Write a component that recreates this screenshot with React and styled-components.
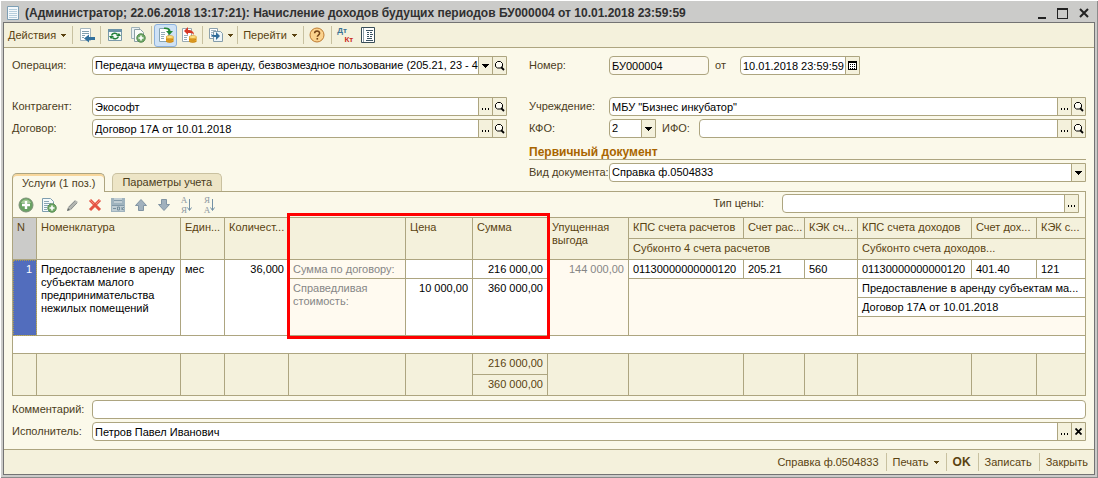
import React, { useState } from 'react'
import styled, { createGlobalStyle, css } from 'styled-components'

const line = '#ada580'
const brown = '#5a4311'

const GlobalStyle = createGlobalStyle`
  * {
    box-sizing: border-box;
  }

  body {
    margin: 0;
    background: #fff;
    color: #000;
    font-family: 'Liberation Sans', Arial, sans-serif;
    font-size: 11px;
    line-height: 13px;
  }

  button, input, select {
    font: inherit;
    color: inherit;
    margin: 0;
    padding: 0;
    border: 0;
    border-radius: 0;
    background: none;
  }
`

/* ---------- icons ---------- */

const Icon = ({ children, size = 16 }) => (
  <svg width={size} height={size} viewBox='0 0 16 16' aria-hidden='true'>
    {children}
  </svg>
)

const Arrow = () => (
  <svg width='7' height='4' viewBox='0 0 7 4' shapeRendering='crispEdges' aria-hidden='true'>
    <path d='M0 0h7v1H6v1H5v1H4v1H3V3H2V2H1V1H0z' fill='currentColor' />
  </svg>
)

const SmallArrow = () => (
  <svg width='5' height='3' viewBox='0 0 5 3' shapeRendering='crispEdges' aria-hidden='true'>
    <path d='M0 0h5v1H4v1H3v1H2V2H1V1H0z' fill='currentColor' />
  </svg>
)

const Magnifier = () => (
  <svg width='10' height='10' viewBox='0 0 10 10' aria-hidden='true'>
    <path d='M2.500 .500h3l2 2v3l-2 1.500h-3l-2-1.500v-3z' fill='#fdfcf3' stroke='#000' />
    <path d='M6 6l3 3' stroke='#000' strokeWidth='1.8' />
  </svg>
)

const Dots = () => (
  <svg width='8' height='9' viewBox='0 0 8 9' shapeRendering='crispEdges' aria-hidden='true'>
    <path d='M0 6h1v2H0zM3 6h1v2H3zM6 6h1v2H6z' fill='#000' />
  </svg>
)

const Cross = () => (
  <svg width='7' height='7' viewBox='0 0 7 7' aria-hidden='true'>
    <path d='M.500 .500l6 6M6.500 .500l-6 6' stroke='#000' strokeWidth='1.8' />
  </svg>
)

const Calendar = () => (
  <svg width='9' height='9' viewBox='0 0 9 9' shapeRendering='crispEdges' aria-hidden='true'>
    <path d='M0 0h9v9H0zM1 2v6h7V2z' fill='#000' fillRule='evenodd' />
    <path d='M1 2h7v6H1z' fill='#fff' />
    <path d='M2 3h1v1H2zM4 3h1v1H4zM6 3h1v1H6zM2 5h1v1H2zM4 5h1v1H4zM6 5h1v1H6zM2 7h1v1H2zM4 7h1v1H4zM6 7h1v1H6z' fill='#000' />
  </svg>
)

const Sheet = () => (
  <Icon>
    <path d='M2.500 1.500h11v13h-11z' fill='#f4f9fc' stroke='#7d9fb5' />
    <path d='M4 4.500h8M4 6.500h8M4 8.500h8M4 10.500h8M4 12.500h8' stroke='#b5cedd' />
  </Icon>
)

const ReturnIcon = () => (
  <Icon>
    <path d='M1.500 1.500h10v12h-10z' fill='#fff' stroke='#a5b6be' />
    <path d='M3 4.500h7M3 6.500h7M3 8.500h3M3 10.500h2' stroke='#83a0ae' />
    <path d='M5 11.500l5-4v2.500h6v3h-6v2.500z' fill='#32719d' />
  </Icon>
)

const RefreshIcon = () => (
  <Icon>
    <path d='M1.500 2.500h13v11h-13z' fill='#f5faf8' stroke='#7c9aa9' />
    <path d='M1 2h14v3H1z' fill='#6b93a8' />
    <path d='M4.500 8.500c1-2.500 4.500-3 6-1' fill='none' stroke='#24813b' strokeWidth='1.6' />
    <path d='M11.500 9.500c-1 2.500-4.500 3-6 1' fill='none' stroke='#24813b' strokeWidth='1.6' />
    <path d='M9 9h5l-2-3zM2 9h5l-3 3z' fill='#24813b' />
  </Icon>
)

const Plus = () => (
  <>
    <circle cx='11' cy='11' r='4.2' fill='#73ac6a' stroke='#4e854a' />
    <path d='M11 8.500v5M8.500 11h5' stroke='#fff' strokeWidth='1.6' />
  </>
)

const CopyIcon = () => (
  <Icon>
    <path d='M1.500 .500h8v11h-8z' fill='#e9f0f1' stroke='#a0b2b8' />
    <path d='M4.500 2.500h6l3 3v9h-9z' fill='#fafcf8' stroke='#8ca0a6' />
    <Plus />
  </Icon>
)

const AddCopyIcon = () => (
  <Icon>
    <path d='M1.500 1.500h8l3 3v10h-11z' fill='#f6fafb' stroke='#7e9eaf' />
    <path d='M3 4.500h5M3 6.500h7M3 8.500h5M3 10.500h3M3 12.500h3' stroke='#8aa6b5' />
    <Plus />
  </Icon>
)

const Coins = () => (
  <>
    <path d='M8 10v4.500c0 1.500 7.500 1.500 7.500 0V10z' fill='#eca928' />
    <path d='M8 12c1 1.500 6.500 1.500 7.500 0M8 14c1 1.500 6.500 1.500 7.500 0' fill='none' stroke='#b97913' strokeWidth='.8' />
    <ellipse cx='11.800' cy='10' rx='3.700' ry='1.500' fill='#ffe082' stroke='#cf9425' strokeWidth='.6' />
  </>
)

const PostIcon = () => (
  <Icon>
    <path d='M1.500 1.500h9v13h-9z' fill='#fff' stroke='#87a4b3' />
    <path d='M3 5.500h4M3 7.500h4M3 9.500h3M3 11.500h3' stroke='#94abb7' />
    <path d='M6 .500c4-.500 6.500 1 6.500 3.500H15l-3.500 4L8 4h2.500c0-1.500-1.500-2.200-4.500-2z' fill='#238735' />
    <Coins />
  </Icon>
)

const UnpostIcon = () => (
  <Icon>
    <path d='M1.500 1.500h9v13h-9z' fill='#fff' stroke='#9aabb2' />
    <path d='M3 8.500h4M3 10.500h3M3 12.500h3' stroke='#94abb7' />
    <path d='M3 4l4-4v3c4 0 6 2 6 5-1-2-3-2-6-2v2z' fill='#d73825' />
    <Coins />
  </Icon>
)

const BasedOnIcon = () => (
  <Icon>
    <path d='M1.500 1.500h8v10h-8z' fill='#fff' stroke='#8ca1ad' />
    <path d='M3 3.500h5M3 5.500h3M3 9.500h2' stroke='#a4b7c0' />
    <path d='M5.500 4.500h7l2 2v8h-9z' fill='#eef5f7' stroke='#849dab' />
    <path d='M3 6c0 2 2 2 5 2V5l4 4-4 4v-3c-4 0-5-1-5-4z' fill='#316d9a' />
  </Icon>
)

const HelpIcon = () => (
  <Icon>
    <circle cx='8' cy='8' r='7' fill='#fbd28d' stroke='#bd7b32' />
    <path
      d='M5.600 6.300c0-3.200 5-3.200 5 0 0 1.700-2.300 1.800-2.300 3.500'
      fill='none'
      stroke='#754417'
      strokeWidth='1.5'
    />
    <path d='M7.500 11h1.600v1.600H7.500z' fill='#754417' />
  </Icon>
)

const BookIcon = () => (
  <Icon>
    <path d='M1.500 .500h13v15h-13z' fill='#fff' stroke='#394d58' />
    <path d='M3.500 1v14' stroke='#8fa0a8' />
    <path d='M6 3.500h7M7 5.500h2M10 5.500h2M7 7.500h2M10 7.500h3M7 9.500h2M10 9.500h2M7 11.500h5M6 13.500h7' stroke='#3d5563' />
  </Icon>
)

const AddIcon = () => (
  <Icon>
    <circle cx='8' cy='8' r='7' fill='#69a263' stroke='#7d9278' />
    <path d='M3 6a5.300 5.300 0 0 1 10 0z' fill='#a7cb99' />
    <path d='M8 4v8M4 8h8' stroke='#fff' strokeWidth='2.4' />
  </Icon>
)

const PencilIcon = () => (
  <Icon>
    <path d='M3 14l1-4 7-7 3 2-7 8z' fill='#b3b6b1' />
    <path d='M5 10l6-6M7 12l6-6' stroke='#8f9491' />
    <path d='M3 14l1-3 2 2z' fill='#656b68' />
  </Icon>
)

const DeleteIcon = () => (
  <Icon>
    <path d='M3 3l10 10M13 3L3 13' stroke='#e45443' strokeWidth='3' />
    <path d='M3 3l4 4M13 3L9 7' stroke='#f28c7d' />
  </Icon>
)

const SaveIcon = () => (
  <Icon>
    <path d='M1 1h14v14H1z' fill='#9fb3be' />
    <path d='M4 1h8v5H4zM2 9h12v5H2z' fill='#c0cdd3' />
    <path d='M4 3.500h8M2 8.500h12' stroke='#8299a7' />
    <path d='M3 11.500h3M7.500 10v3h2v-3zM12 10v3M14 10l-2 2 2 1' fill='none' stroke='#758e9c' />
  </Icon>
)

const MoveIcon = ({ down }) => (
  <Icon>
    <path
      d={down ? 'M5.500 2.500h5v5h3L8 13.500 2.500 7.500h3z' : 'M5.500 13.500h5v-5h3L8 2.500 2.500 8.500h3z'}
      fill='#a1b1bd'
      stroke='#8194a3'
    />
  </Icon>
)

const SortArrow = () => (
  <svg width='5' height='14' viewBox='0 0 5 14' aria-hidden='true'>
    <path d='M2.500 1v11M.500 9.500l2 3 2-3' fill='none' stroke='#7391a5' />
  </svg>
)

const WinMin = () => (
  <svg width='11' height='11' viewBox='0 0 11 11' aria-hidden='true'>
    <path d='M2 9h8v2H2z' fill='#222' />
  </svg>
)

const WinMax = () => (
  <svg width='11' height='11' viewBox='0 0 11 11' shapeRendering='crispEdges' aria-hidden='true'>
    <path d='M0 0h11v11H0zM1 2v8h9V2z' fill='#222' fillRule='evenodd' />
  </svg>
)

const WinClose = () => (
  <svg width='11' height='11' viewBox='0 0 11 11' aria-hidden='true'>
    <path d='M2 1l8 8M10 1L2 9' stroke='#222' strokeWidth='2' />
  </svg>
)

/* ---------- form fields ---------- */

const Picker = ({ kind, label }) => (
  <FieldButton type='button' aria-label={label}>
    {kind === 'dots' && <Dots />}
    {kind === 'find' && <Magnifier />}
    {kind === 'date' && <Calendar />}
    {kind === 'clear' && <Cross />}
  </FieldButton>
)

const TextField = ({ id, value = '', buttons = [], width, readOnly }) => {
  const [text, setText] = useState(value)

  return (
    <Field $width={width} $round={buttons.length === 0} $muted={readOnly}>
      <input id={id} value={text} readOnly={readOnly} onChange={(e) => setText(e.target.value)} />
      {buttons.map((kind) => (
        <Picker key={kind} kind={kind} label={kind} />
      ))}
    </Field>
  )
}

const SelectField = ({ id, value, buttons = [], width }) => (
  <Field $width={width}>
    <select id={id} defaultValue={value}>
      <option value={value}>{value}</option>
    </select>
    <DropMark>
      <Arrow />
    </DropMark>
    {buttons.map((kind) => (
      <Picker key={kind} kind={kind} label={kind} />
    ))}
  </Field>
)

/* ---------- table ---------- */

const columns = [24, null, 44, 64, 117, 67, 75, 81, 115, 61, 53, 114, 65, 48]

const ServicesTable = () => (
  <TableWrap>
    <Table>
      <colgroup>
        {columns.map((width, index) => (
          <Col key={index} $width={width} />
        ))}
      </colgroup>
      <thead>
        <HeadRow>
          <Th rowSpan='2' $active>N</Th>
          <Th rowSpan='2'>Номенклатура</Th>
          <Th rowSpan='2'>Един...</Th>
          <Th rowSpan='2'>Количест...</Th>
          <Th rowSpan='2' />
          <Th rowSpan='2'>Цена</Th>
          <Th rowSpan='2'>Сумма</Th>
          <Th rowSpan='2' $wrap>Упущенная выгода</Th>
          <Th>КПС счета расчетов</Th>
          <Th>Счет рас...</Th>
          <Th>КЭК сч...</Th>
          <Th>КПС счета доходов</Th>
          <Th>Счет дох...</Th>
          <Th $last>КЭК с...</Th>
        </HeadRow>
        <HeadRow>
          <Th colSpan='3'>Субконто 4 счета расчетов</Th>
          <Th colSpan='3' $last>Субконто счета доходов...</Th>
        </HeadRow>
      </thead>
      <tbody>
        <Row>
          <CurrentCell rowSpan='4'>1</CurrentCell>
          <Td rowSpan='4'>Предоставление в аренду субъектам малого предпринимательства нежилых помещений</Td>
          <Td rowSpan='4'>мес</Td>
          <Td rowSpan='4' $right>36,000</Td>
          <Td $muted>Сумма по договору:</Td>
          <Td />
          <Td $right>216 000,00</Td>
          <Td rowSpan='4' $right $muted>144 000,00</Td>
          <Td>01130000000000120</Td>
          <Td>205.21</Td>
          <Td>560</Td>
          <Td>01130000000000120</Td>
          <Td>401.40</Td>
          <Td $last>121</Td>
        </Row>
        <Row>
          <Td rowSpan='3' $muted>Справедливая стоимость:</Td>
          <Td rowSpan='3' $right>10 000,00</Td>
          <Td rowSpan='3' $right>360 000,00</Td>
          <Td rowSpan='3' colSpan='3' $muted />
          <Td colSpan='3' $last>Предоставление в аренду субъектам ма...</Td>
        </Row>
        <Row>
          <Td colSpan='3' $last>Договор 17А от 10.01.2018</Td>
        </Row>
        <Row>
          <Td colSpan='3' $last $muted />
        </Row>
        <EmptyRow>
          <Td colSpan='14' $last />
        </EmptyRow>
      </tbody>
      <tfoot>
        <HeadRow>
          {columns.map((width, index) => (
            <Th
              key={index}
              as='td'
              rowSpan={index === 6 ? 1 : 2}
              $right={index === 6}
              $last={index === columns.length - 1}
            >
              {index === 6 && '216 000,00'}
            </Th>
          ))}
        </HeadRow>
        <HeadRow>
          <Th as='td' $right>360 000,00</Th>
        </HeadRow>
      </tfoot>
    </Table>
    <Highlight />
  </TableWrap>
)

const App = () => {
  const [tab, setTab] = useState(0)

  return (
    <>
      <GlobalStyle />
      <Window>
        <TitleBar>
          <Sheet />
          <h1>
            (Администратор; 22.06.2018 13:17:21): Начисление доходов будущих периодов БУ000004 от
            10.01.2018 23:59:59
          </h1>
          <button type='button' aria-label='Свернуть'><WinMin /></button>
          <button type='button' aria-label='Развернуть'><WinMax /></button>
          <button type='button' aria-label='Закрыть окно'><WinClose /></button>
        </TitleBar>
        <Frame>
          <Toolbar>
            <TextButton type='button'>Действия <SmallArrow /></TextButton>
            <Separator />
            <ToolButton type='button' aria-label='Перейти к списку'><ReturnIcon /></ToolButton>
            <Separator />
            <ToolButton type='button' aria-label='Перечитать'><RefreshIcon /></ToolButton>
            <ToolButton type='button' aria-label='Скопировать'><CopyIcon /></ToolButton>
            <Separator />
            <ToolButton type='button' aria-label='Провести' $active><PostIcon /></ToolButton>
            <ToolButton type='button' aria-label='Отмена проведения'><UnpostIcon /></ToolButton>
            <Separator />
            <ToolButton type='button' aria-label='Ввести на основании' $menu>
              <BasedOnIcon />
              <SmallArrow />
            </ToolButton>
            <Separator />
            <TextButton type='button'>Перейти <SmallArrow /></TextButton>
            <Separator />
            <ToolButton type='button' aria-label='Справка'><HelpIcon /></ToolButton>
            <Separator />
            <ToolButton type='button'>
              <DebitCredit>
                <span>Дт</span>
                <b>Кт</b>
              </DebitCredit>
            </ToolButton>
            <ToolButton type='button' aria-label='Журнал'><BookIcon /></ToolButton>
          </Toolbar>

          <Content>
            <Form>
              <Column>
                <FormRow $space='large'>
                  <Label htmlFor='operation'>Операция:</Label>
                  <SelectField
                    id='operation'
                    value='Передача имущества в аренду, безвозмездное пользование (205.21, 23 - 401.40)'
                    buttons={['find']}
                  />
                </FormRow>
                <FormRow>
                  <Label htmlFor='partner'>Контрагент:</Label>
                  <TextField id='partner' value='Экософт' buttons={['dots', 'find']} />
                </FormRow>
                <FormRow>
                  <Label htmlFor='contract'>Договор:</Label>
                  <TextField id='contract' value='Договор 17А от 10.01.2018' buttons={['dots', 'find']} />
                </FormRow>
                <Tabs role='tablist'>
                  <Tab type='button' role='tab' $active={tab === 0} onClick={() => setTab(0)}>
                    Услуги (1 поз.)
                  </Tab>
                  <Tab type='button' role='tab' $active={tab === 1} onClick={() => setTab(1)}>
                    Параметры учета
                  </Tab>
                </Tabs>
              </Column>
              <Column $end>
                <FormRow $space='large'>
                  <Label htmlFor='number'>Номер:</Label>
                  <TextField id='number' value='БУ000004' width={100} readOnly />
                  <Label htmlFor='date' $width={31} $inner>от</Label>
                  <TextField id='date' value='10.01.2018 23:59:59' width={120} buttons={['date']} />
                </FormRow>
                <FormRow>
                  <Label htmlFor='company'>Учреждение:</Label>
                  <TextField id='company' value='МБУ "Бизнес инкубатор"' buttons={['dots', 'find']} />
                </FormRow>
                <FormRow>
                  <Label htmlFor='kfo'>КФО:</Label>
                  <SelectField id='kfo' value='2' width={47} />
                  <Label htmlFor='ifo' $width={43} $inner>ИФО:</Label>
                  <TextField id='ifo' buttons={['dots', 'find']} />
                </FormRow>
                <SectionTitle>Первичный документ</SectionTitle>
                <FormRow>
                  <Label htmlFor='kind'>Вид документа:</Label>
                  <SelectField id='kind' value='Справка ф.0504833' />
                </FormRow>
              </Column>
            </Form>

            <Panel>
              <CommandBar>
                <ToolButton type='button' aria-label='Добавить'><AddIcon /></ToolButton>
                <ToolButton type='button' aria-label='Добавить копированием'><AddCopyIcon /></ToolButton>
                <ToolButton type='button' aria-label='Изменить'><PencilIcon /></ToolButton>
                <ToolButton type='button' aria-label='Удалить'><DeleteIcon /></ToolButton>
                <ToolButton type='button' aria-label='Сохранить'><SaveIcon /></ToolButton>
                <ToolButton type='button' aria-label='Вверх'><MoveIcon /></ToolButton>
                <ToolButton type='button' aria-label='Вниз'><MoveIcon down /></ToolButton>
                <ToolButton type='button'>
                  <SortLetters><span>А</span><span>Я</span></SortLetters>
                  <SortArrow />
                </ToolButton>
                <ToolButton type='button'>
                  <SortLetters><span>Я</span><span>А</span></SortLetters>
                  <SortArrow />
                </ToolButton>
                <PriceType>
                  <label htmlFor='price'>Тип цены:</label>
                  <TextField id='price' width={297} buttons={['dots']} />
                </PriceType>
              </CommandBar>
              <ServicesTable />
            </Panel>

            <FormRow>
              <Label htmlFor='comment'>Комментарий:</Label>
              <TextField id='comment' />
            </FormRow>
            <FormRow>
              <Label htmlFor='author'>Исполнитель:</Label>
              <TextField id='author' value='Петров Павел Иванович' buttons={['dots', 'clear']} />
            </FormRow>
          </Content>

          <Footer>
            <TextButton type='button'>Справка ф.0504833</TextButton>
            <Separator />
            <TextButton type='button'>Печать <SmallArrow /></TextButton>
            <Separator />
            <TextButton type='button' $strong>OK</TextButton>
            <Separator />
            <TextButton type='button'>Записать</TextButton>
            <Separator />
            <TextButton type='button'>Закрыть</TextButton>
          </Footer>
        </Frame>
      </Window>
    </>
  )
}

const Window = styled.main`
  margin: 1px 0 0 1px;
  padding: 0 2px 2px;
  background: #cbcbc9;
  border-right: 1px solid #8b8b8b;
  border-bottom: 1px solid #8b8b8b;
`

const TitleBar = styled.header`
  height: 21px;
  display: flex;
  align-items: center;
  padding: 3px 1px 0 2px;

  h1 {
    flex: 1;
    min-width: 0;
    margin: 0 0 0 4px;
    overflow: hidden;
    white-space: nowrap;
    color: #303030;
    font-size: 12px;
    line-height: 16px;
  }

  button {
    width: 21px;
    height: 13px;
    display: flex;
    align-items: center;
    justify-content: center;
  }
`

const Frame = styled.div`
  border: 1px solid #737373;
  background: #fbf9ea;
`

const Toolbar = styled.div`
  height: 25px;
  display: flex;
  align-items: center;
  padding: 0 1px;
  background: #f4f1dc;
  border-bottom: 1px solid ${line};
`

const Separator = styled.span`
  width: 1px;
  height: 18px;
  margin: 0 2px;
  background: #c8c1a0;
`

const TextButton = styled.button`
  height: 20px;
  display: flex;
  align-items: center;
  gap: 5px;
  padding: 0 4px 0 3px;
  color: ${brown};
  white-space: nowrap;
  cursor: pointer;

  ${({ $strong }) =>
    $strong &&
    css`
      font-size: 12px;
      font-weight: bold;
    `}
`

const ToolButton = styled.button`
  width: ${({ $menu }) => ($menu ? 30 : 23)}px;
  height: 23px;
  flex: none;
  display: flex;
  align-items: center;
  justify-content: center;
  gap: ${({ $menu }) => ($menu ? 4 : 0)}px;
  color: ${brown};
  border-radius: 3px;
  cursor: pointer;

  ${({ $active }) =>
    $active &&
    css`
      background: #cfe2f5;
      border: 1px solid #8cb1dc;
    `}
`

const DebitCredit = styled.span`
  width: 16px;
  display: flex;
  flex-direction: column;
  font-size: 8px;
  line-height: 9px;

  span {
    color: #3c7394;
    font-weight: bold;
    text-align: left;
  }

  b {
    color: #cb2d1e;
    text-align: right;
  }
`

const SortLetters = styled.span`
  display: flex;
  flex-direction: column;
  color: #8d9aa1;
  font-family: 'Liberation Serif', serif;
  font-size: 9px;
  line-height: 10px;
`

const Content = styled.div`
  padding: 8px 8px 5px;
`

const Form = styled.div`
  display: grid;
  grid-template-columns: minmax(0, 495fr) minmax(0, 557fr);
  column-gap: 22px;
`

const Column = styled.div`
  display: flex;
  flex-direction: column;
  padding-bottom: ${({ $end }) => ($end ? 6 : 0)}px;
`

const FormRow = styled.div`
  display: flex;
  align-items: center;
  height: 19px;
  margin-bottom: ${({ $space }) => ($space === 'large' ? 22 : 3)}px;
`

const Label = styled.label`
  width: ${({ $width = 80 }) => $width}px;
  flex: none;
  padding-left: ${({ $inner }) => ($inner ? 6 : 0)}px;
  color: #4b3d1c;
  white-space: nowrap;
`

const Field = styled.div`
  flex: ${({ $width }) => ($width ? 'none' : '1')};
  width: ${({ $width }) => ($width ? `${$width}px` : 'auto')};
  min-width: 0;
  height: 19px;
  display: flex;
  overflow: hidden;
  background: ${({ $muted }) => ($muted ? '#fcf9ee' : '#fff')};
  border: 1px solid ${line};
  border-radius: ${({ $round }) => ($round ? '4px' : '4px 0 0 4px')};

  input,
  select {
    flex: 1;
    width: 0;
    min-width: 0;
    height: 17px;
    padding: 0 0 0 2px;
    appearance: none;
    outline: none;
  }
`

const mark = css`
  width: 14px;
  flex: none;
  display: flex;
  align-items: center;
  justify-content: center;
  background: #f4f1dc;
  border-left: 1px solid ${line};
`

const FieldButton = styled.button`
  ${mark}
  cursor: pointer;
`

const DropMark = styled.span`
  ${mark}
  pointer-events: none;
`

const SectionTitle = styled.h2`
  height: 19px;
  margin: 0 0 3px;
  padding-top: 4px;
  border-bottom: 1px solid ${line};
  color: #a96500;
  font-size: 12px;
  line-height: 14px;
`

const Tabs = styled.div`
  display: flex;
  align-items: flex-end;
  gap: 7px;
  margin: auto 0 -1px;
`

const Tab = styled.button`
  height: ${({ $active }) => ($active ? 19 : 18)}px;
  margin-bottom: ${({ $active }) => ($active ? 0 : 1)}px;
  padding: 0 9px;
  color: #4b3d1c;
  border: 1px solid ${({ $active }) => ($active ? line : '#c9c1a0')};
  border-bottom: 0;
  border-radius: 5px 5px 0 0;
  background: ${({ $active }) => ($active ? '#fbf9ea' : '#ede5c6')};
  box-shadow: ${({ $active }) => ($active ? 'inset 0 2px #f8d79c' : 'none')};
  cursor: pointer;
`

const Panel = styled.section`
  margin: 0 0 4px;
  border: 1px solid ${line};
  border-bottom: 0;
`

const CommandBar = styled.div`
  height: 25px;
  display: flex;
  align-items: center;
  padding: 0 6px 0 1px;
`

const PriceType = styled.div`
  display: flex;
  align-items: center;
  gap: 18px;
  margin: 0 0 2px auto;
  color: #4b3d1c;
`

const TableWrap = styled.div`
  position: relative;
  border-top: 1px solid ${line};
`

const Table = styled.table`
  width: 100%;
  table-layout: fixed;
  border-collapse: separate;
  border-spacing: 0;
`

const Col = styled.col`
  width: ${({ $width }) => ($width ? `${$width}px` : 'auto')};
`

const HeadRow = styled.tr`
  height: 21px;
`

const Row = styled.tr`
  height: 19px;
`

const EmptyRow = styled.tr`
  height: 18px;
`

const cell = css`
  padding: 3px 4px 0;
  overflow: hidden;
  vertical-align: top;
  text-align: ${({ $right }) => ($right ? 'right' : 'left')};
  border: 0 solid ${line};
  border-bottom-width: 1px;
  border-right-width: ${({ $last }) => ($last ? 0 : 1)}px;
`

const Th = styled.th`
  ${cell}
  background: ${({ $active }) => ($active ? '#cbcbc9' : '#f4f1dc')};
  color: ${brown};
  font-weight: normal;
  white-space: ${({ $wrap }) => ($wrap ? 'normal' : 'nowrap')};
`

const Td = styled.td`
  ${cell}
  background: ${({ $muted }) => ($muted ? '#fffaf0' : '#fff')};
  color: ${({ $muted }) => ($muted ? '#868686' : '#000')};
`

const CurrentCell = styled(Td)`
  background: #526dbd;
  color: #fff;
  text-align: right;
  outline: 1px dotted #a99a52;
  outline-offset: -1px;
`

/* marks the price and amount columns, which sit at a fixed distance from the right edge */
const Highlight = styled.div`
  position: absolute;
  top: -5px;
  right: 535px;
  width: 263px;
  height: 126px;
  border: 3px solid #f00;
  pointer-events: none;
`

const Footer = styled.footer`
  height: 25px;
  display: flex;
  align-items: center;
  justify-content: flex-end;
  gap: 1px;
  padding-right: 2px;
  background: #f4f1dc;
  border-top: 1px solid ${line};
`

export default App
